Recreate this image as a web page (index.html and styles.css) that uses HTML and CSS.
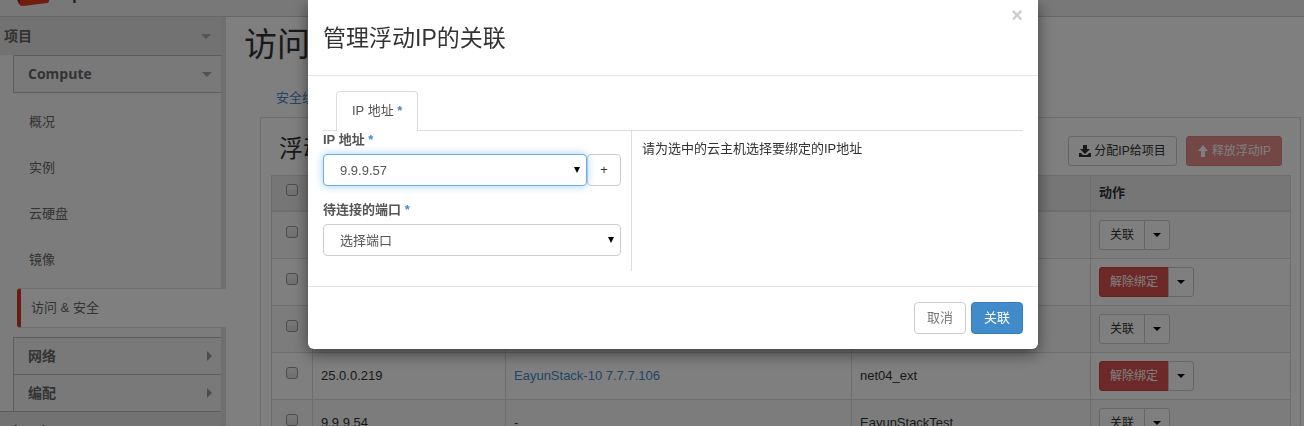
FILE: index.html
```html
<!DOCTYPE html>
<html lang="zh-CN">
<head>
<meta charset="utf-8">
<title>访问 &amp; 安全</title>
<link rel="stylesheet" href="styles.css">
</head>
<body>
<header class="topbar">
  <a class="brand" href="#" aria-label="OpenStack">
    <svg class="brand-mark" viewBox="0 0 36 12" width="36" height="12"><path fill="#e03a20" d="M0 0L4 10Q5 12 8 12L32 9Q34 9 34 7V0z"/><path fill="#9c2410" d="M0 0L4 10 6 5 5 0z"/></svg>
    <span class="brand-name">openstack</span>
  </a>
</header>
<div class="layout">
  <nav class="sidebar">
    <button class="dash">项目<i class="caret-down"></i></button>
    <div class="groups">
      <button class="group">Compute<i class="caret-down"></i></button>
      <ul class="links">
        <li><a href="#">概况</a></li>
        <li><a href="#">实例</a></li>
        <li><a href="#">云硬盘</a></li>
        <li><a href="#">镜像</a></li>
        <li class="active"><a href="#">访问 &amp; 安全</a></li>
      </ul>
      <button class="group">网络<i class="caret-right"></i></button>
      <button class="group">编配<i class="caret-right"></i></button>
    </div>
    <button class="dash dash-next">Identity</button>
  </nav>
  <main class="content">
    <h1>访问 &amp; 安全</h1>
    <div class="page-tabs"><a href="#">安全组</a></div>
    <section class="panel">
      <div class="panel-head">
        <h2>浮动IP</h2>
        <div class="actions">
          <button class="btn btn-sm"><svg width="12" height="12" viewBox="0 0 12 12"><path d="M4 0h4v4h3L6 9 1 4h3zM0 8h2l2 2h4l2-2h2v4H0z"/></svg>分配IP给项目</button>
          <button class="btn btn-sm btn-danger" disabled><svg width="12" height="12" viewBox="0 0 12 12"><path d="M6 0l5 6H8v6H4V6H1z"/></svg>释放浮动IP</button>
        </div>
      </div>
      <table class="grid">
        <colgroup><col class="c-check"><col class="c-ip"><col class="c-inst"><col class="c-pool"><col></colgroup>
        <thead><tr><th><input type="checkbox" aria-label="全选"></th><th></th><th></th><th></th><th>动作</th></tr></thead>
        <tbody>
          <tr><td><input type="checkbox" aria-label="选择"></td><td></td><td></td><td></td><td><div class="split"><button class="btn btn-sm">关联</button><button class="btn btn-sm" aria-label="更多"><i class="caret"></i></button></div></td></tr>
          <tr><td><input type="checkbox" aria-label="选择"></td><td></td><td></td><td></td><td><div class="split"><button class="btn btn-sm btn-danger">解除绑定</button><button class="btn btn-sm" aria-label="更多"><i class="caret"></i></button></div></td></tr>
          <tr><td><input type="checkbox" aria-label="选择"></td><td></td><td></td><td></td><td><div class="split"><button class="btn btn-sm">关联</button><button class="btn btn-sm" aria-label="更多"><i class="caret"></i></button></div></td></tr>
          <tr><td><input type="checkbox" aria-label="选择"></td><td>25.0.0.219</td><td><a href="#">EayunStack-10 7.7.7.106</a></td><td>net04_ext</td><td><div class="split"><button class="btn btn-sm btn-danger">解除绑定</button><button class="btn btn-sm" aria-label="更多"><i class="caret"></i></button></div></td></tr>
          <tr><td><input type="checkbox" aria-label="选择"></td><td>9.9.9.54</td><td>-</td><td>EayunStackTest</td><td><div class="split"><button class="btn btn-sm">关联</button><button class="btn btn-sm" aria-label="更多"><i class="caret"></i></button></div></td></tr>
        </tbody>
      </table>
    </section>
  </main>
</div>
<div class="backdrop">
  <form class="modal" role="dialog" aria-labelledby="dlg-title">
    <div class="modal-head">
      <h3 id="dlg-title">管理浮动IP的关联</h3>
      <button type="button" class="close" aria-label="关闭">×</button>
    </div>
    <div class="modal-body">
      <div class="tabs"><a class="tab" href="#">IP 地址 <b>*</b></a></div>
      <div class="cols">
        <div class="fields">
          <label for="ip">IP 地址 <b>*</b></label>
          <div class="input-row">
            <div class="select focus"><select id="ip"><option>9.9.9.57</option></select></div>
            <button type="button" class="btn add">+</button>
          </div>
          <label for="port">待连接的端口 <b>*</b></label>
          <div class="select"><select id="port"><option>选择端口</option></select></div>
        </div>
        <p class="help">请为选中的云主机选择要绑定的IP地址</p>
      </div>
    </div>
    <div class="modal-foot">
      <button type="button" class="btn cancel">取消</button>
      <button type="submit" class="btn btn-primary">关联</button>
    </div>
  </form>
</div>
</body>
</html>
```
FILE: styles.css
```css
* { box-sizing: border-box; }
body {
  margin: 0;
  height: 100vh;
  overflow: hidden;
  display: flex;
  flex-direction: column;
  background: #fff;
  color: #333;
  font: 13px/20px "Liberation Sans", "Noto Sans CJK SC", sans-serif;
}
button, select { font: inherit; color: inherit; cursor: pointer; }
a { color: #428bca; text-decoration: none; }
h1, h2, h3 { margin: 0; font-weight: 400; }
svg { fill: currentColor; }

.topbar {
  flex: none;
  height: 17px;
  overflow: hidden;
  display: flex;
  align-items: flex-end;
  padding-left: 15px;
  background: #f0f0f0;
  border-bottom: 1px solid #ccc;
}
.brand { display: flex; align-items: flex-end; gap: 6px; padding-bottom: 10px; color: #444; }
.brand-mark { display: block; }
.brand-name { font-size: 26px; line-height: 30px; padding-bottom: 2px; }

.layout { flex: 1; min-height: 0; overflow: hidden; display: flex; }
.sidebar {
  flex: none;
  width: 226px;
  background: linear-gradient(to right, #f9f9f9 221px, #dfdfdf 221px);
  color: #666;
}
.sidebar button { border: 0; text-align: left; font-weight: 700; font-size: 14px; font-family: "Open Sans", "Noto Sans CJK SC", sans-serif; }
.dash {
  display: flex;
  align-items: center;
  justify-content: space-between;
  width: 221px;
  height: 38px;
  padding: 0 10px 0 4px;
  background: #e4e4e4;
}
.groups { width: 208px; margin-left: 13px; }
.sidebar .group {
  display: flex;
  align-items: center;
  justify-content: space-between;
  width: 100%;
  height: 38px;
  padding: 0 9px 0 14px;
  background: #f3f3f3;
  border: 1px solid #bbb;
  border-right: 0;
}
.sidebar .group + .group { margin-top: -1px; }
.dash-next { margin-top: -1px; }
.sidebar .dash-next { border-top: 1px solid #bbb; }
.caret-down { border: 5px solid transparent; border-top-color: #a6a6a6; border-bottom: 0; }
.caret-right { border: 5px solid transparent; border-left-color: #999; border-right: 0; }
.links { list-style: none; margin: 0; padding: 6px 0 9px; }
.links a { display: block; padding: 13px 16px; color: #666; }
.links .active { width: 209px; margin: 5px 0 0 4px; }
.links .active a {
  padding: 9px 10px;
  background: #fff;
  border: solid #e4e4e4;
  border-width: 1px 0;
  border-left: 4px solid #d9381e;
  border-radius: 4px 0 0 4px;
}

.content { flex: 1; min-width: 0; padding: 8px 3px 0 34px; }
h1 { margin-left: -16px; font-size: 33px; line-height: 40px; white-space: nowrap; }
.page-tabs { padding: 23px 16px 9px; }
.panel { border: 1px solid #ddd; padding: 9px 9px 0 10px; }
.panel-head { display: flex; justify-content: space-between; align-items: center; padding: 0 9px 0 8px; height: 48px; }
h2 { font-size: 24px; line-height: 28px; padding-bottom: 4px; }
.actions { display: flex; gap: 9px; }

.btn {
  display: inline-flex;
  align-items: center;
  justify-content: center;
  gap: 3px;
  height: 32px;
  padding: 0 12px;
  background: #fff;
  border: 1px solid #ccc;
  border-radius: 4px;
  color: #333;
}
.btn.btn-sm { height: 30px; padding: 0 10px; font-size: 12px; border-radius: 3px; }
.btn.btn-danger { background: #d9534f; border-color: #d43f3a; color: #fff; }
.btn:disabled { opacity: .65; }
.btn.btn-primary { background: #428bca; border-color: #357ebd; color: #fff; }
.split { display: flex; }
.split .btn:first-child { border-radius: 3px 0 0 3px; }
.split .btn:last-child { border-radius: 0 3px 3px 0; margin-left: -1px; padding: 0 8px; }
.caret { border: 4px solid transparent; border-top-color: #000; border-bottom: 0; }

.grid { width: 100%; table-layout: fixed; border-collapse: collapse; }
.grid th, .grid td { border: 1px solid #ddd; padding: 8px; text-align: left; }
.grid td { height: 47px; }
.grid th { height: 35px; padding: 6px 8px; background: #ececec; border-bottom-width: 2px; }
.grid tbody tr:nth-child(odd) { background: #f9f9f9; }
.grid th:first-child, .grid td:first-child { text-align: center; vertical-align: top; }
.c-check { width: 41px; }
.c-ip { width: 193px; }
.c-inst { width: 346px; }
.c-pool { width: 239px; }
input[type="checkbox"] {
  appearance: none;
  display: block;
  width: 12px;
  height: 12px;
  margin: 2px auto;
  background: linear-gradient(#f4f4f4, #ddd);
  border: 1px solid #999;
  border-radius: 3px;
}
.grid td input[type="checkbox"] { margin-top: 6px; }

.backdrop {
  position: fixed;
  inset: 0;
  display: flex;
  justify-content: center;
  align-items: flex-start;
  padding-left: 42px;
  background: rgba(0, 0, 0, .5);
}
.modal {
  width: 730px;
  max-width: 100%;
  background: #fff;
  border-radius: 0 0 6px 6px;
  box-shadow: 0 5px 15px rgba(0, 0, 0, .5);
}
.modal-head { display: flex; justify-content: space-between; align-items: flex-start; padding: 5px 15px 20px; border-bottom: 1px solid #e5e5e5; }
h3 { font-size: 23px; line-height: 33px; padding-top: 17px; }
.close { padding: 0; border: 0; background: none; font-size: 20px; font-weight: 700; line-height: 20px; color: #ccc; }
.modal-body { padding: 15px; }
.tabs { display: flex; padding-left: 13px; border-bottom: 1px solid #ddd; }
.tab {
  margin-bottom: -1px;
  padding: 9px 15px 10px;
  color: #555;
  background: #fff;
  border: 1px solid #ddd;
  border-bottom: 0;
  border-radius: 4px 4px 0 0;
}
.modal b { color: #428bca; }
.cols { display: flex; }
.fields { width: 309px; padding-right: 10px; padding-bottom: 15px; border-right: 1px solid #ddd; }
.fields label { display: block; font-weight: 700; color: #555; line-height: 18px; margin-bottom: 5px; }
.input-row { display: flex; margin-bottom: 15px; }
.input-row .select { flex: 1; }
.select { display: flex; position: relative; }
.select::after {
  content: "";
  position: absolute;
  right: 7px;
  top: 13px;
  border: 3px solid transparent;
  border-top: 6px solid #000;
  border-bottom: 0;
  pointer-events: none;
}
select {
  appearance: none;
  width: 100%;
  height: 32px;
  padding: 2px 16px 0;
  color: #555;
  background: #fff;
  border: 1px solid #ccc;
  border-radius: 4px;
}
.focus select { border-color: #66afe9; box-shadow: 0 0 8px rgba(102, 175, 233, .6); }
.add { width: 34px; padding: 0; }
.help { margin: 0; padding: 8px 10px; }
.modal-foot { display: flex; justify-content: flex-end; gap: 5px; padding: 15px; border-top: 1px solid #e5e5e5; }
.cancel { color: #777; }
```
